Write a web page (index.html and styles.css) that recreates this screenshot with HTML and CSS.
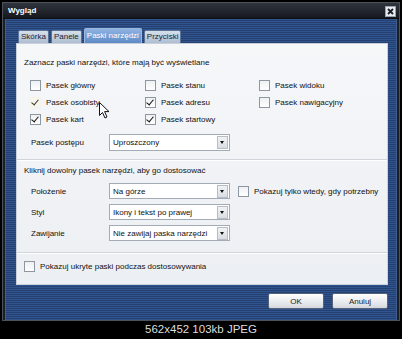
FILE: index.html
```html
<!DOCTYPE html>
<html lang="pl">
<head>
<meta charset="UTF-8" />
<title>Wygląd</title>
<link rel="stylesheet" href="styles.css">
</head>
<body>

<!-- Okno dialogowe -->
<div class="window">
  <div class="titlebar">
    <span class="title">Wygląd</span>
    <span class="close">
      <svg width="11" height="11" viewBox="0 0 11 11"><rect x="0.5" y="0.5" width="10" height="10" fill="#e8ebef" stroke="#9aa3b0"/><path d="M3 3L8 8M8 3L3 8" stroke="#1a1d22" stroke-width="1.8"/></svg>
    </span>
  </div>

  <div class="frame">
    <div class="tabs">
      <span class="tab">Skórka</span>
      <span class="tab">Panele</span>
      <span class="tab active">Paski narzędzi</span>
      <span class="tab">Przyciski</span>
    </div>

    <div class="panel">
      <p class="heading">Zaznacz paski narzędzi, które mają być wyświetlane</p>
      <div class="checks">
        <label class="check"><span class="box"></span>Pasek główny</label>
        <label class="check"><span class="box"></span>Pasek stanu</label>
        <label class="check"><span class="box"></span>Pasek widoku</label>
        <label class="check"><span class="box hover checked"></span>Pasek osobisty</label>
        <label class="check"><span class="box checked"></span>Pasek adresu</label>
        <label class="check"><span class="box"></span>Pasek nawigacyjny</label>
        <label class="check"><span class="box checked"></span>Pasek kart</label>
        <label class="check"><span class="box checked"></span>Pasek startowy</label>
      </div>
      <div class="row first">
        <span class="lbl">Pasek postępu</span>
        <div class="select">Uproszczony<span class="arrow"></span></div>
      </div>

      <div class="sep"></div>

      <p class="heading second">Kliknij dowolny pasek narzędzi, aby go dostosować</p>
      <div class="rows">
        <div class="row">
          <span class="lbl">Położenie</span>
          <div class="select">Na górze<span class="arrow"></span></div>
          <label class="check side"><span class="box"></span>Pokazuj tylko wtedy, gdy potrzebny</label>
        </div>
        <div class="row">
          <span class="lbl">Styl</span>
          <div class="select">Ikony i tekst po prawej<span class="arrow"></span></div>
        </div>
        <div class="row">
          <span class="lbl">Zawijanie</span>
          <div class="select">Nie zawijaj paska narzędzi<span class="arrow"></span></div>
        </div>
      </div>

      <div class="sep last"></div>

      <label class="check bottom"><span class="box"></span>Pokazuj ukryte paski podczas dostosowywania</label>

      <!-- kursor myszy -->
      <svg class="cursor" width="11" height="17" viewBox="0 0 11 17"><path d="M0.5 0.5V13.5L3.5 10.5L6 16L8 15L5.6 9.6H10L0.5 0.5Z" fill="#fff" stroke="#111" stroke-width="1"/></svg>
    </div>

    <div class="buttons">
      <button>OK</button>
      <button>Anuluj</button>
    </div>
  </div>
</div>

<div class="caption">562x452 103kb JPEG</div>

</body>
</html>
```

FILE: styles.css
```css
/* Tło strony */
body {
  margin: 0;
  width: 402px;
  height: 339px;
  background: #000;
  font-family: "Liberation Sans", Arial, sans-serif;
  overflow: hidden;
}

/* Okno */
.window {
  margin: 2px 0 0 2px;
  width: 396px;
  height: 317px;
  border: 1px solid #4c525c;
  background: #1b1f26;
  display: flex;
  flex-direction: column;
}

.titlebar {
  height: 15px;
  display: flex;
  align-items: center;
  justify-content: space-between;
  padding: 0 3px 0 5px;
  background: linear-gradient(#30353e, #15181d);
  border-bottom: 1px solid #0c0e12;
}

.title {
  color: #fff;
  font-size: 8px;
  font-weight: bold;
}

.close {
  display: flex;
  margin-top: 2px;
}

.frame {
  flex: 1;
  margin: 0 2px 0 2px;
  padding: 9px 8px 0 10px;
  background: repeating-linear-gradient(#2f548e 0 1px, #243f70 1px 2px);
  border-left: 1px solid #3f5e8f;
  border-right: 1px solid #3f5e8f;
}

/* Zakładki */
.tabs {
  display: flex;
  align-items: flex-end;
  gap: 2px;
  height: 15px;
  padding-left: 2px;
}

.tab {
  height: 12px;
  line-height: 12px;
  padding: 0 2px;
  font-size: 8px;
  color: #1c2330;
  background: linear-gradient(#d6e0ec, #aebdd0);
  border: 1px solid #5c7398;
  border-bottom: none;
  border-radius: 2px 2px 0 0;
}

.tab.active {
  height: 14px;
  line-height: 14px;
  color: #fff;
  background: linear-gradient(#8fb3e2, #5d8ac6);
  border-color: #9cb8dc;
}

/* Panel */
.panel {
  position: relative;
  height: 242px;
  box-sizing: border-box;
  padding: 13px 0 0 0;
  background: linear-gradient(#f6f7f9, #eceff3);
  border: 1px solid #c9d0da;
  font-size: 8px;
  color: #111;
}

.heading {
  margin: 0 0 0 7px;
  height: 12px;
  line-height: 12px;
}

.heading.second {
  margin-top: 4px;
}

.checks {
  display: grid;
  grid-template-columns: 115px 114px 1fr;
  grid-auto-rows: 17px;
  margin: 8px 0 0 13px;
}

.check {
  display: flex;
  align-items: center;
  gap: 5px;
  white-space: nowrap;
}

.box {
  width: 9px;
  height: 9px;
  border: 1px solid #8e96a2;
  background: linear-gradient(#eef0f3, #fff);
  position: relative;
}

.box.checked::after {
  content: "";
  position: absolute;
  left: 2px;
  top: 0;
  width: 3px;
  height: 6px;
  border: solid #111;
  border-width: 0 1.5px 1.5px 0;
  transform: rotate(40deg);
}

.box.hover {
  border-color: #f3f3ec;
  background: #f6f6ee;
}

.box.hover::after {
  border-color: #3a3a20;
}

.row {
  display: flex;
  align-items: center;
  margin-left: 14px;
  height: 16px;
}

.row.first {
  margin-top: 6px;
  height: 17px;
}

.lbl {
  width: 78px;
}

.select {
  width: 121px;
  height: 100%;
  box-sizing: border-box;
  display: flex;
  align-items: center;
  justify-content: space-between;
  padding: 0 1px 0 3px;
  background: #fff;
  border: 1px solid #a3abb7;
}

.arrow {
  width: 11px;
  height: 13px;
  box-sizing: border-box;
  border: 1px solid #b6bdc7;
  background: linear-gradient(#f2f3f5, #d9dde3);
  position: relative;
}

.arrow::after {
  content: "";
  position: absolute;
  left: 2px;
  top: 4px;
  border: 2.5px solid transparent;
  border-top: 3px solid #111;
  border-bottom: none;
}

.rows {
  display: flex;
  flex-direction: column;
  gap: 5px;
  margin-top: 6px;
}

.check.side {
  margin-left: 8px;
}

.sep {
  margin-top: 8px;
  height: 1px;
  background: #cfd4db;
  border-bottom: 1px solid #fff;
}

.sep.last {
  margin-top: 11px;
}

.check.bottom {
  margin: 6px 0 0 7px;
  height: 12px;
}

.cursor {
  position: absolute;
  left: 82px;
  top: 58px;
}

/* Przyciski */
.buttons {
  display: flex;
  justify-content: flex-end;
  gap: 8px;
  margin-top: 8px;
}

button {
  width: 56px;
  height: 16px;
  padding: 0;
  font-family: "Liberation Sans", Arial, sans-serif;
  font-size: 8px;
  color: #1a1a1a;
  background: linear-gradient(#ffffff, #e3e6ea 70%, #d3d7dd);
  border: 1px solid #56637a;
  border-radius: 2px;
}

.caption {
  margin-top: 2px;
  text-align: center;
  color: #dedede;
  font-size: 11.5px;
}
```
